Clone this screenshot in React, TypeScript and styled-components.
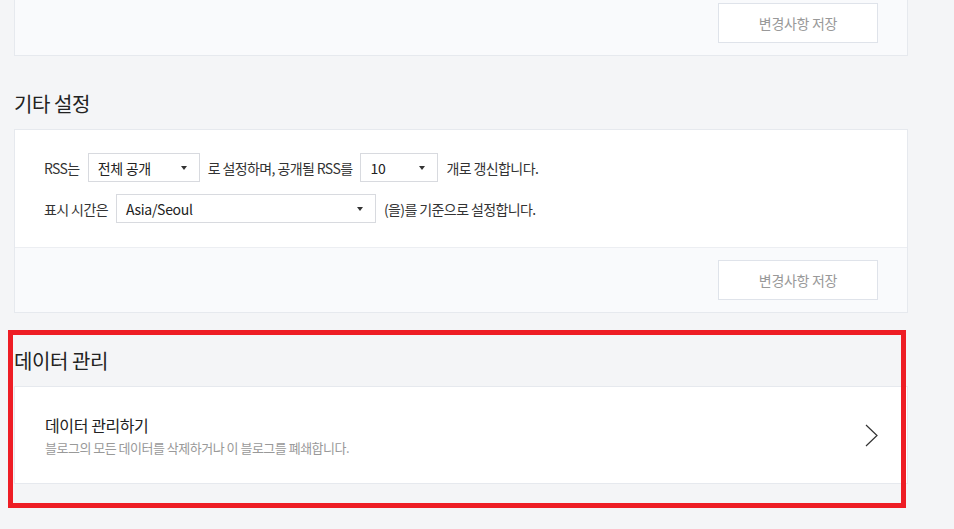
import React from 'react';
import styled, { createGlobalStyle } from 'styled-components';

const GlobalStyle = createGlobalStyle`
    html, body {
        margin: 0;
        padding: 0;
        background: #f4f5f7;
        font-family: 'Noto Sans CJK KR', 'Noto Sans', sans-serif;
        color: #333;
        overflow: hidden;
    }
`;

const Page = styled.div`
    width: 894px;
    padding-left: 14px;
    padding-bottom: 40px;
`;

const Panel = styled.div<{ $scrolled?: boolean }>`
    background: #fff;
    border: 1px solid #e6e9ee;
    margin-top: ${(p) => (p.$scrolled ? '-10px' : '0')};
`;

const Footer = styled.div<{ $bordered?: boolean }>`
    display: flex;
    justify-content: flex-end;
    padding: 12px 29px;
    background: #f9fafc;
    border-top: ${(p) => (p.$bordered ? '1px solid #eceef2' : 'none')};
`;

const SaveButton = styled.button`
    width: 160px;
    height: 40px;
    background: #fff;
    border: 1px solid #dfe3ea;
    border-radius: 0;
    color: #999;
    font-family: 'Noto Sans CJK KR', 'Noto Sans', sans-serif;
    font-size: 14px;
    letter-spacing: -0.3px;
    padding: 0;
`;

const Heading = styled.h2`
    margin: 0;
    padding: 34px 0 11px;
    font-size: 20px;
    line-height: 28px;
    font-weight: 400;
    color: #222;
    letter-spacing: -0.4px;
`;

const Content = styled.div`
    display: flex;
    flex-direction: column;
    gap: 12px;
    padding: 23px 29px 24px;
`;

const Row = styled.div`
    display: flex;
    align-items: center;
    gap: 8px;
    font-size: 14px;
    color: #333;
    letter-spacing: -0.6px;
`;

const Select = styled.div<{ $width: number }>`
    position: relative;
    box-sizing: border-box;
    width: ${(p) => p.$width}px;
    height: 29px;
    display: flex;
    align-items: center;
    padding-left: 9px;
    border: 1px solid #d8dadf;
    background: #fff;
    color: #222;
    font-size: 14px;
    letter-spacing: -0.3px;

    &::after {
        content: '';
        position: absolute;
        right: 12px;
        top: 12px;
        border-left: 3px solid transparent;
        border-right: 3px solid transparent;
        border-top: 4px solid #333;
    }
`;

const Section = styled.div`
    position: relative;
`;

const Highlight = styled.div`
    position: absolute;
    top: 17px;
    left: -6px;
    width: 898px;
    height: 178px;
    box-sizing: border-box;
    border: 5px solid #ee1d25;
    pointer-events: none;
`;

const DataItem = styled.div`
    display: flex;
    align-items: center;
    justify-content: space-between;
    padding: 26px 29px 25px 30px;
`;

const ItemText = styled.div`
    display: flex;
    flex-direction: column;
`;

const ItemTitle = styled.span`
    font-size: 16px;
    line-height: 24px;
    color: #222;
    letter-spacing: -0.4px;
`;

const ItemDesc = styled.span`
    font-size: 13px;
    line-height: 21px;
    color: #999;
    letter-spacing: -0.5px;
`;

function Chevron() {
    return (
        <svg width="13" height="23" viewBox="0 0 13 23">
            <polyline points="1,1 12,11.5 1,22" fill="none" stroke="#333" strokeWidth="1.2" />
        </svg>
    );
}

function App() {
    return (
        <Page>
            <GlobalStyle />
            <Panel $scrolled>
                <Footer>
                    <SaveButton>변경사항 저장</SaveButton>
                </Footer>
            </Panel>

            <Heading>기타 설정</Heading>
            <Panel>
                <Content>
                    <Row>
                        RSS는
                        <Select $width={112}>전체 공개</Select>
                        로 설정하며, 공개될 RSS를
                        <Select $width={78}>10</Select>
                        개로 갱신합니다.
                    </Row>
                    <Row>
                        표시 시간은
                        <Select $width={260}>Asia/Seoul</Select>
                        (을)를 기준으로 설정합니다.
                    </Row>
                </Content>
                <Footer $bordered>
                    <SaveButton>변경사항 저장</SaveButton>
                </Footer>
            </Panel>

            <Section>
                <Heading>데이터 관리</Heading>
                <Panel>
                    <DataItem>
                        <ItemText>
                            <ItemTitle>데이터 관리하기</ItemTitle>
                            <ItemDesc>블로그의 모든 데이터를 삭제하거나 이 블로그를 폐쇄합니다.</ItemDesc>
                        </ItemText>
                        <Chevron />
                    </DataItem>
                </Panel>
                <Highlight />
            </Section>
        </Page>
    );
}

export default App;
